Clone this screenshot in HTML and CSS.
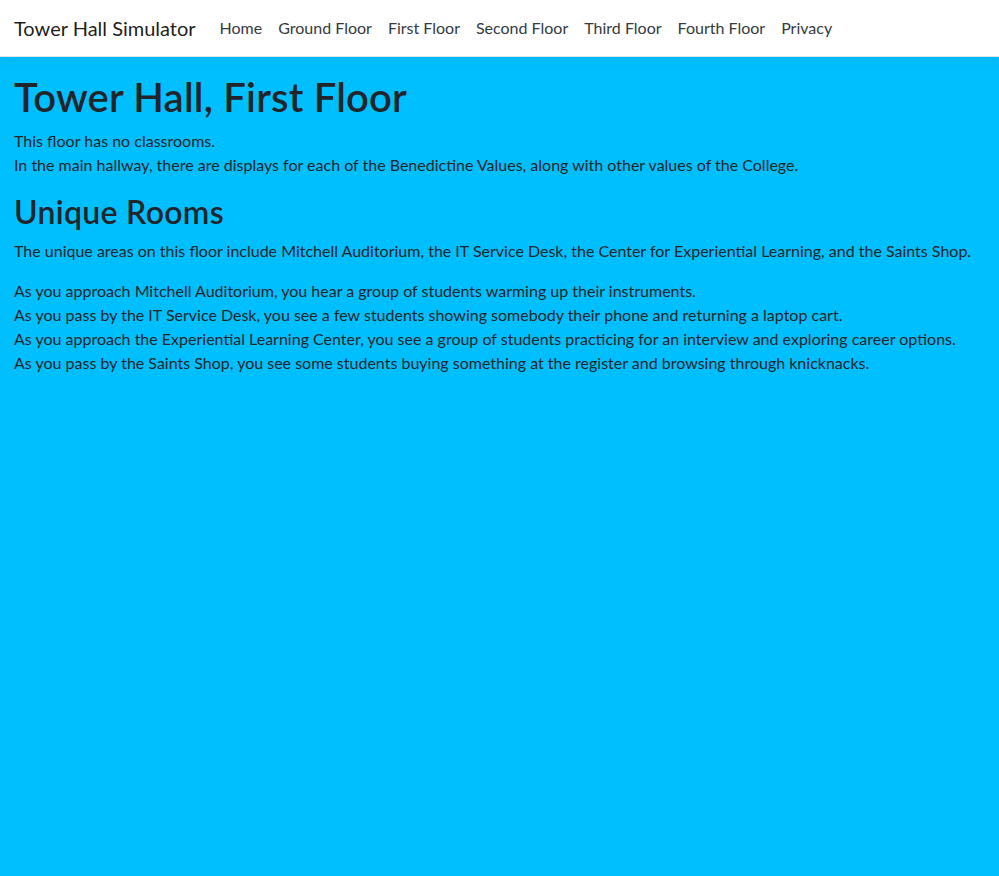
FILE: index.html
```html
<!DOCTYPE html>
<html lang="en">
<head>
<meta charset="utf-8">
<title>First Floor - Tower Hall Simulator</title>
<link rel="stylesheet" href="styles.css">
</head>
<body>
<header>
  <nav class="navbar">
    <a class="brand" href="#">Tower Hall Simulator</a>
    <ul class="nav">
      <li><a class="nav-link" href="#">Home</a></li>
      <li><a class="nav-link" href="#">Ground Floor</a></li>
      <li><a class="nav-link" href="#">First Floor</a></li>
      <li><a class="nav-link" href="#">Second Floor</a></li>
      <li><a class="nav-link" href="#">Third Floor</a></li>
      <li><a class="nav-link" href="#">Fourth Floor</a></li>
      <li><a class="nav-link" href="#">Privacy</a></li>
    </ul>
  </nav>
</header>
<main class="content">
  <h1 class="title">Tower Hall, First Floor</h1>
  <p class="text">This floor has no classrooms.<br>In the main hallway, there are displays for each of the Benedictine Values, along with other values of the College.</p>
  <h2 class="subtitle">Unique Rooms</h2>
  <p class="text">The unique areas on this floor include Mitchell Auditorium, the IT Service Desk, the Center for Experiential Learning, and the Saints Shop.</p>
  <p class="text">As you approach Mitchell Auditorium, you hear a group of students warming up their instruments.<br>As you pass by the IT Service Desk, you see a few students showing somebody their phone and returning a laptop cart.<br>As you approach the Experiential Learning Center, you see a group of students practicing for an interview and exploring career options.<br>As you pass by the Saints Shop, you see some students buying something at the register and browsing through knicknacks.</p>
</main>
</body>
</html>
```
FILE: styles.css
```css
html, body {
  margin: 0;
  padding: 0;
}
body {
  background: #00bfff;
  color: #212529;
  font-family: "Lato", "Open Sans", sans-serif;
  font-size: 16px;
  line-height: 1.5;
  min-height: 876px;
}
.navbar {
  background: #fff;
  border-bottom: 1px solid #dee2e6;
  box-shadow: 0 4px 12px rgba(0,0,0,.05);
  display: flex;
  align-items: center;
  height: 56px;
  padding: 0 14px;
  margin-bottom: 16px;
}
.brand {
  font-size: 20px;
  color: rgba(0,0,0,.9);
  text-decoration: none;
  margin-right: 16px;
  line-height: 30px;
}
.nav {
  list-style: none;
  display: flex;
  margin: 0;
  padding: 0;
}
.nav-link {
  display: block;
  padding: 8px 8px;
  color: #343a40;
  text-decoration: none;
}
.content {
  padding: 0 14px;
}
.title {
  font-size: 40px;
  font-weight: 600;
  letter-spacing: 0.2px;
  line-height: 1.2;
  margin: 0 0 8px;
}
.subtitle {
  font-size: 32px;
  font-weight: 600;
  letter-spacing: 0.3px;
  line-height: 1.2;
  margin: 0 0 8px;
}
.text {
  margin: 0 0 16px;
}
```
